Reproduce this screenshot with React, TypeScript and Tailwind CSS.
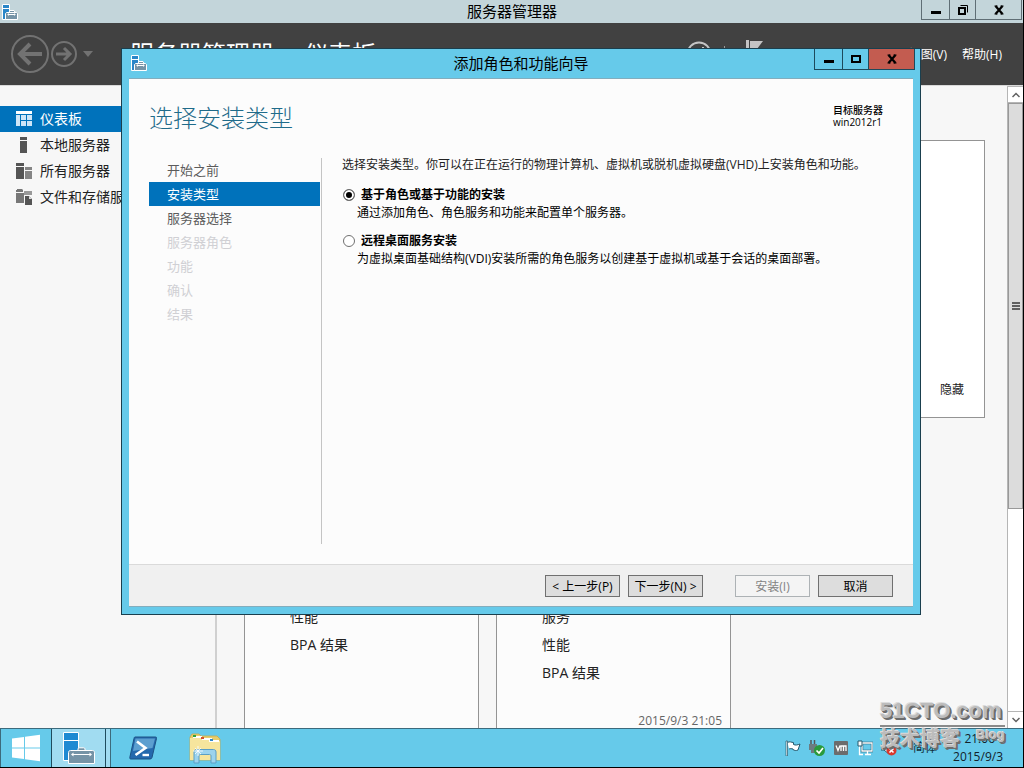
import { useState } from "react";
import type { ReactNode } from "react";
import clsx from "clsx";

const steps = [
  { label: "开始之前", state: "done" },
  { label: "安装类型", state: "active" },
  { label: "服务器选择", state: "done" },
  { label: "服务器角色", state: "disabled" },
  { label: "功能", state: "disabled" },
  { label: "确认", state: "disabled" },
  { label: "结果", state: "disabled" },
];

const installTypes = [
  {
    id: "role-based",
    title: "基于角色或基于功能的安装",
    description: "通过添加角色、角色服务和功能来配置单个服务器。",
  },
  {
    id: "remote-desktop",
    title: "远程桌面服务安装",
    description: "为虚拟桌面基础结构(VDI)安装所需的角色服务以创建基于虚拟机或基于会话的桌面部署。",
  },
];

function ServerIcon() {
  return (
    <svg className="h-4 w-4 shrink-0" viewBox="0 0 16 16">
      <path d="M.5.5h7v15h-7z" fill="#2a86c8" stroke="#fff" />
      <path d="M1 4.5h6" stroke="#fff" />
      <path d="M6.500 9L8 6.500h4L13.500 9" fill="#7593a6" stroke="#fff" />
      <path d="M3.500 9.500l1-1h10l1 1v6h-12z" fill="#7593a6" stroke="#fff" />
      <path d="M5.500 10.500h8M6.500 9.500v2M12.500 9.500v2" stroke="#fff" />
    </svg>
  );
}

function DashboardIcon() {
  return (
    <svg className="h-4 w-4" viewBox="0 0 16 16">
      <path d="M0 0h16v3H0z" fill="#fff" />
      <path d="M0 4h4v11H0zM5 4h5v5H5zM11 4h5v5h-5zM5 10h5v5H5zM11 10h5v5h-5z" fill="#cfe6f7" />
    </svg>
  );
}

function LocalServerIcon() {
  return (
    <svg className="h-4 w-4" viewBox="0 0 16 16">
      <path d="M4 0h7v3H4zM4 4h7v12H4z" fill="#555" />
    </svg>
  );
}

function AllServersIcon() {
  return (
    <svg className="h-4 w-4" viewBox="0 0 16 16">
      <path d="M0 0h8v3H0zM0 4h8v12H0z" fill="#555" />
      <path d="M9 4h7v3H9zM9 8h7v8H9z" fill="#858585" />
    </svg>
  );
}

function StorageIcon() {
  return (
    <svg className="h-4 w-4" viewBox="0 0 16 16">
      <path d="M0 1h1V0h5l1 1v2H0zM0 4h8v10H0z" fill="#777" />
      <path d="M8 2h8v4H8z" fill="#999" />
      <path d="M9 7h4l3 3v6H9z" fill="#555" />
      <path d="M13 7v3h3z" fill="#ddd" />
    </svg>
  );
}

const navItems = [
  { label: "仪表板", icon: DashboardIcon, active: true },
  { label: "本地服务器", icon: LocalServerIcon },
  { label: "所有服务器", icon: AllServersIcon },
  { label: "文件和存储服务", icon: StorageIcon },
];

function WindowControls({ restored, closeRed }: { restored?: boolean; closeRed?: boolean }) {
  const cell = closeRed ? "border-[#1d4a5c]" : "border-[#5f6e75]";
  return (
    <div className={clsx("flex border-x border-b", cell, closeRed ? "h-[21px]" : "h-5")}>
      <button aria-label="最小化" className={clsx("flex w-7 items-center justify-center border-r", cell)}>
        <svg className="h-3 w-3" viewBox="0 0 12 12">
          <path d="M1 7h10v3H1z" />
        </svg>
      </button>
      <button aria-label="最大化" className={clsx("flex w-[26px] items-center justify-center border-r", cell)}>
        <svg className="h-3 w-3" viewBox="0 0 12 12" fill="none" stroke="#000">
          {restored ? (
            <>
              <path d="M2 4h6v6H2z" strokeWidth="2" />
              <path d="M3.5 1.5h7v7" />
            </>
          ) : (
            <path d="M2 3h8v6H2z" strokeWidth="2" />
          )}
        </svg>
      </button>
      <button
        aria-label="关闭"
        className={clsx("flex w-[45px] items-center justify-center", closeRed && "bg-[#c35c50]")}
      >
        <svg className="h-3 w-3" viewBox="0 0 12 12" fill="none" stroke="#000">
          <path d="M2.5 2l7 8M9.5 2l-7 8" strokeWidth="2.2" />
          <path d="M1.500 2h3M7.500 2h3M1.500 10h3M7.500 10h3" />
        </svg>
      </button>
    </div>
  );
}

function AppHeader() {
  return (
    <header className="flex h-[62px] shrink-0 items-center bg-[#414141] pr-[21px] pl-2.5 text-white">
      <div className="flex w-[120px] items-center">
        <button aria-label="后退">
          <svg className="h-10 w-10" viewBox="0 0 40 40" fill="none" stroke="#727272">
            <circle cx="20" cy="20" r="18" strokeWidth="2" />
            <path d="M10 20h22M20 10L10 20l10 10" strokeWidth="4" />
          </svg>
        </button>
        <button aria-label="前进">
          <svg className="h-7 w-7" viewBox="0 0 28 28" fill="none" stroke="#727272">
            <circle cx="14" cy="14" r="12" strokeWidth="2" />
            <path d="M6 14h14M14 8l6 6-6 6" strokeWidth="3" />
          </svg>
        </button>
        <button aria-label="历史记录" className="ml-1">
          <svg className="h-3 w-3" viewBox="0 0 12 12">
            <path d="M1 3h10L6 9z" fill="#727272" />
          </svg>
        </button>
      </div>
      <h1 className="flex flex-1 gap-[30px] text-2xl leading-8">
        <span>服务器管理器</span>
        <span>仪表板</span>
      </h1>
      <div className="mr-[144px] flex items-center gap-3">
        <svg className="h-[26px] w-[26px]" viewBox="0 0 26 26" fill="none" stroke="#c4c4c4" strokeWidth="2">
          <circle cx="13" cy="13" r="11.500" />
          <path d="M8 13a5 5 0 0 1 9-3V6M18 13a5 5 0 0 1-9 3" />
        </svg>
        <span className="h-4 w-px bg-[#9a9a9a]" />
        <svg className="ml-2 h-7 w-5" viewBox="0 0 20 28" fill="#c4c4c4">
          <path d="M1 0h3v28H1zM5 1h13l-6 8H5z" />
        </svg>
      </div>
      <nav className="flex gap-[15px] pt-0.5 text-xs">
        <button>视图(V)</button>
        <button>帮助(H)</button>
      </nav>
    </header>
  );
}

function SideNav() {
  return (
    <nav className="w-[217px] shrink-0 border-r-2 border-[#d0d0d0] pt-5 text-sm">
      {navItems.map(({ label, icon: Icon, active }) => (
        <a
          key={label}
          href="#"
          className={clsx(
            "flex h-[26px] items-center gap-2 pl-4 whitespace-nowrap",
            active ? "bg-[#0072bb] text-white" : "text-[#222]"
          )}
        >
          <Icon />
          {label}
        </a>
      ))}
    </nav>
  );
}

function Tile({ rows, time }: { rows: string[]; time?: string }) {
  return (
    <section className="flex h-[220px] w-[235px] flex-col border border-[#949494] bg-[#fcfcfc] pt-20 pr-2 pl-[45px] text-sm leading-7 text-[#222]">
      {rows.map((row) => (
        <div key={row}>{row}</div>
      ))}
      {time && <time className="mt-auto mb-3 text-right text-xs leading-4 text-[#666]">{time}</time>}
    </section>
  );
}

function ScrollBar() {
  return (
    <div className="flex w-4 shrink-0 flex-col border-l border-[#b5b5b5] bg-white">
      <button aria-label="向上滚动" className="flex h-[17px] items-center justify-center border-y border-[#b5b5b5]">
        <svg className="h-2 w-2" viewBox="0 0 8 8" fill="none" stroke="#606060" strokeWidth="1.500">
          <path d="M.5 6L4 2.500 7.500 6" />
        </svg>
      </button>
      <div className="flex flex-2 items-center justify-center border border-[#999] bg-[#dcdcdc]">
        <svg className="h-2 w-2" viewBox="0 0 8 8" fill="#606060">
          <path d="M0 0h8v2H0zM0 3h8v2H0zM0 6h8v2H0z" />
        </svg>
      </div>
      <div className="flex-1" />
      <button aria-label="向下滚动" className="flex h-[17px] items-center justify-center border-t border-[#b5b5b5]">
        <svg className="h-2 w-2" viewBox="0 0 8 8" fill="none" stroke="#606060" strokeWidth="1.500">
          <path d="M.5 2L4 5.500 7.500 2" />
        </svg>
      </button>
    </div>
  );
}

function DialogButton({ children, disabled }: { children: ReactNode; disabled?: boolean }) {
  return (
    <button
      disabled={disabled}
      className="h-[22px] w-[75px] border border-[#707070] bg-[#dddddd] pt-px text-xs leading-5 whitespace-nowrap text-black disabled:border-[#adb2b5] disabled:bg-[#f4f4f4] disabled:text-[#838383]"
    >
      {children}
    </button>
  );
}

function Wizard() {
  const [type, setType] = useState("role-based");

  return (
    <div
      role="dialog"
      aria-labelledby="wizard-title"
      className="absolute top-12 right-[102px] bottom-[152px] left-[121px] flex flex-col border border-[#1a3f4e] bg-[#66caea] px-[7px] pb-[7px]"
    >
      <div className="flex h-[29px] shrink-0 items-start">
        <div className="flex h-7 flex-1 items-center pl-[2px]">
          <ServerIcon />
        </div>
        <h2 id="wizard-title" className="pr-1 text-[15px] leading-7">
          添加角色和功能向导
        </h2>
        <div className="-mr-[2px] flex flex-1 justify-end">
          <WindowControls closeRed />
        </div>
      </div>
      <div className="flex min-h-0 flex-1 flex-col border-y border-[#83adbd] bg-[#fcfcfc]">
        <div className="flex h-[79px] shrink-0 items-start justify-between pt-[23px] pr-[30px] pl-5">
          <h3 className="text-2xl leading-8 font-light text-[#1f6b8a]">选择安装类型</h3>
          <div className="pt-0.5 text-[10px] leading-3 text-black">
            <div className="font-medium">目标服务器</div>
            <div>win2012r1</div>
          </div>
        </div>
        <div className="flex min-h-0 flex-1 pb-5 pl-5">
          <ol className="w-[173px] shrink-0 border-r border-[#c4c4c4] pr-px text-[13px] leading-6">
            {steps.map((step) => (
              <li
                key={step.label}
                className={clsx(
                  "pl-[18px]",
                  step.state === "active" && "bg-[#0072bb] text-white",
                  step.state === "done" && "text-[#5c5c5c]",
                  step.state === "disabled" && "text-[#d0d0d4]"
                )}
              >
                {step.label}
              </li>
            ))}
          </ol>
          <div className="flex-1 pl-5 text-xs text-[#222]">
            <p className="leading-[14px]">
              选择安装类型。你可以在正在运行的物理计算机、虚拟机或脱机虚拟硬盘(VHD)上安装角色和功能。
            </p>
            <div className="mt-3.5 flex flex-col gap-2.5 leading-[18px] text-black">
              {installTypes.map((item) => (
                <div key={item.id}>
                  <div className="flex items-center gap-1.5 pl-px">
                    <input
                      type="radio"
                      id={item.id}
                      name="install-type"
                      checked={type === item.id}
                      onChange={() => setType(item.id)}
                      className="h-3 w-3 appearance-none rounded-full border border-[#707070] bg-white checked:bg-black checked:shadow-[inset_0_0_0_2px_white]"
                    />
                    <label htmlFor={item.id} className="font-bold">
                      {item.title}
                    </label>
                  </div>
                  <p className="pl-[15px]">{item.description}</p>
                </div>
              ))}
            </div>
          </div>
        </div>
        <div className="flex h-[42px] shrink-0 items-center justify-end gap-2 border-t border-[#dadada] bg-[#f0f0f0] pr-5">
          <DialogButton>&lt; 上一步(P)</DialogButton>
          <DialogButton>下一步(N) &gt;</DialogButton>
          <span className="w-4" />
          <DialogButton disabled>安装(I)</DialogButton>
          <DialogButton>取消</DialogButton>
        </div>
      </div>
    </div>
  );
}

function Taskbar() {
  return (
    <footer className="flex h-[39px] shrink-0 border-t border-l border-[#3c6a7c] bg-[#66caea]">
      <button aria-label="开始" className="flex w-[50px] items-center justify-center">
        <svg className="h-7 w-7" viewBox="0 0 28 28" fill="#fff">
          <path d="M0 4.500L12 3v10.500H0zM13 2.800L28 .8v12.700H13zM0 14.500h12V25L0 23.500zM13 14.500h15v12.700l-15-2z" />
        </svg>
      </button>
      <button
        aria-label="服务器管理器"
        className="flex w-[55px] items-center justify-center border-x border-[#1f4c5e] bg-[#a1dcf1]"
      >
        <svg className="h-8 w-8" viewBox="0 0 32 32">
          <path d="M.5.5h15v28H.5z" fill="#1e8ad2" stroke="#fff" />
          <path d="M1 8.500h14" stroke="#fff" />
          <path d="M15 19v-2c0-.8.500-1.200 1.200-1.200h4.600c.700 0 1.200.4 1.200 1.200v2" fill="#7593a6" stroke="#fff" />
          <path d="M5.500 20.500c0-1.200.8-2 2-2h22c1.200 0 2 .8 2 2v11h-26z" fill="#7593a6" stroke="#fff" />
          <path d="M9 22.500h19" stroke="#fff" />
          <path d="M8 22.500l2.500-2v4zM29 22.500l-2.500-2v4z" fill="#fff" />
        </svg>
      </button>
      <span className="w-[5px] border-r border-[#3c6a7c] bg-[#a1dcf1]" />
      <button aria-label="PowerShell" className="ml-[18px] flex items-center">
        <svg className="h-7 w-7" viewBox="0 0 28 28">
          <path d="M6 3h20.500c1 0 1.300.600 1 1.500L23 23.500c-.3 1-1 1.500-2 1.500H2c-1 0-1.500-.6-1.200-1.500L5 4.500C5.200 3.500 5.500 3 6 3z" fill="#2569ad" stroke="#1d5285" />
          <path d="M6.500 4.500h19.500L23.500 14 4 17z" fill="#5c9fd0" />
          <path d="M8 7.500l8.500 6.500-10 7" fill="none" stroke="#fff" strokeWidth="2.600" />
          <path d="M13.500 21H20" stroke="#fff" strokeWidth="2.400" />
        </svg>
      </button>
      <button aria-label="文件资源管理器" className="ml-8 flex items-center">
        <svg className="h-8 w-8" viewBox="0 0 32 32">
          <path d="M1 5l2-3h7l2 2h16l3 3v21H1z" fill="#e6cd6c" stroke="#c9a94a" strokeWidth=".8" />
          <path d="M2 6h17l2 3h10v19H1V6z" fill="#f6e59d" />
          <path d="M4 4h9v2H4zM13 6h10v2H13zM20 8h10v2H20z" fill="#fff" />
          <path d="M4 3h3v2H4z" fill="#2fa23c" />
          <path d="M12 5h3v2h-3z" fill="#d4502c" />
          <path d="M21 7h3v2h-3z" fill="#2f86c8" />
          <path d="M5 31V20c0-1.500 1-2.500 2.500-2.500h17c1.500 0 2.500 1 2.500 2.500v11h-5v-7c0-1-.5-1.500-1.500-1.500h-9c-1 0-1.500.5-1.500 1.500v7z" fill="#9bd3ee" stroke="#5a9fc6" />
          <path d="M9 14v10M4 19h10M6 16l6 6M12 16l-6 6" stroke="#fff" strokeWidth=".8" />
        </svg>
      </button>
      <div className="ml-auto flex items-center gap-2">
        <svg className="h-4 w-4" viewBox="0 0 16 16" stroke="#24586c">
          <path d="M2.500 2.500c2-1.500 4 0 6 0v2c2 1 4 .5 6.500-.5l-2 6c-2 1-3.500.5-5-.5V9c-1.500-.5-3-.5-4 0" fill="#fff" />
          <path d="M1 1h1.500v15H1z" fill="#fff" strokeWidth=".7" />
        </svg>
        <svg className="h-4 w-4" viewBox="0 0 16 16">
          <path d="M2 0v4M5.500 0v4" stroke="#555" strokeWidth="1.500" />
          <path d="M0 4h8v6H6v3H2v-3H0z" fill="#6d7b80" />
          <circle cx="10.500" cy="10.500" r="5.500" fill="#2a9a3c" />
          <path d="M7.500 10.500l2.500 2.500 4-5" fill="none" stroke="#fff" strokeWidth="1.700" />
        </svg>
        <svg className="h-4 w-4" viewBox="0 0 16 16">
          <rect x="1" y="1" width="14" height="14" rx="1" fill="#6c6c6c" />
          <path d="M3 5.500l2 5 2-5M8 11V6h2.500v5M10.500 6H13v5" fill="none" stroke="#fff" strokeWidth="1.300" />
        </svg>
        <svg className="h-4 w-4" viewBox="0 0 16 16">
          <path d="M5 3h10v8H5z" fill="#66caea" stroke="#24586c" strokeWidth="2.400" />
          <path d="M5 3h10v8H5zM8 14.500h6M10.500 11v3M2.500 6v8.500H6" fill="none" stroke="#fff" strokeWidth="1.300" />
          <path d="M1 1h4v5H1z" fill="#fff" stroke="#24586c" />
        </svg>
        <svg className="h-4 w-4" viewBox="0 0 16 16">
          <path d="M0 5h3l5-4v13l-5-4H0z" fill="#fff" stroke="#24586c" />
          <circle cx="10.500" cy="10.500" r="5" fill="#d8382d" />
          <path d="M8.500 8.500l4 4M12.500 8.500l-4 4" stroke="#fff" strokeWidth="1.600" />
        </svg>
        <span className="ml-2 text-xs text-[#12303c]">简体</span>
        <div className="mr-5 ml-2 text-right text-xs leading-[18px] text-[#12222a]">
          <div className="pr-2">21:06</div>
          <div>2015/9/3</div>
        </div>
      </div>
    </footer>
  );
}

function SiteBadge() {
  return (
    <div className="pointer-events-none absolute right-[18px] bottom-4 w-[125px] font-bold text-[#bcbcbc] [text-shadow:-1px_-1px_0_#dcdcdc,1px_1px_0_#6d6d6d,2px_2px_0_#6d6d6d]">
      <div className="border-b-2 border-[#8a8a8a] font-['Liberation_Sans',sans-serif] text-[22px] leading-7 whitespace-nowrap">
        51CTO.com
      </div>
      <div className="flex justify-between">
        <span className="text-xl leading-6">技术博客</span>
        <span className="font-['Liberation_Sans',sans-serif] text-[13px] leading-4">Blog</span>
      </div>
    </div>
  );
}

export default function App() {
  return (
    <div className="relative flex h-screen flex-col overflow-hidden border-r border-b border-black bg-[#f7f7f7] font-['Open_Sans','Noto_Sans_CJK_SC',sans-serif]">
      <div className="flex h-[23px] shrink-0 items-start bg-[#c3d5da] pr-px">
        <div className="flex h-[23px] flex-1 items-center pl-[2px]">
          <ServerIcon />
        </div>
        <span className="text-[15px] leading-[23px]">服务器管理器</span>
        <div className="flex flex-1 justify-end">
          <WindowControls restored />
        </div>
      </div>
      <AppHeader />
      <div className="flex min-h-0 flex-1 border-t border-[#d9d9d9]">
        <SideNav />
        <main className="min-w-0 flex-1 overflow-hidden pt-[54px] pr-[22px] pl-[27px]">
          <section className="flex h-[278px] items-end justify-end border border-[#949494] bg-white pr-5 pb-[18px]">
            <button className="text-xs leading-[18px] text-[#222]">隐藏</button>
          </section>
          <div className="mt-[104px] flex gap-[17px]">
            <Tile rows={["性能", "BPA 结果"]} />
            <Tile rows={["服务", "性能", "BPA 结果"]} time="2015/9/3 21:05" />
          </div>
        </main>
        <ScrollBar />
      </div>
      <Taskbar />
      <Wizard />
      <SiteBadge />
    </div>
  );
}
